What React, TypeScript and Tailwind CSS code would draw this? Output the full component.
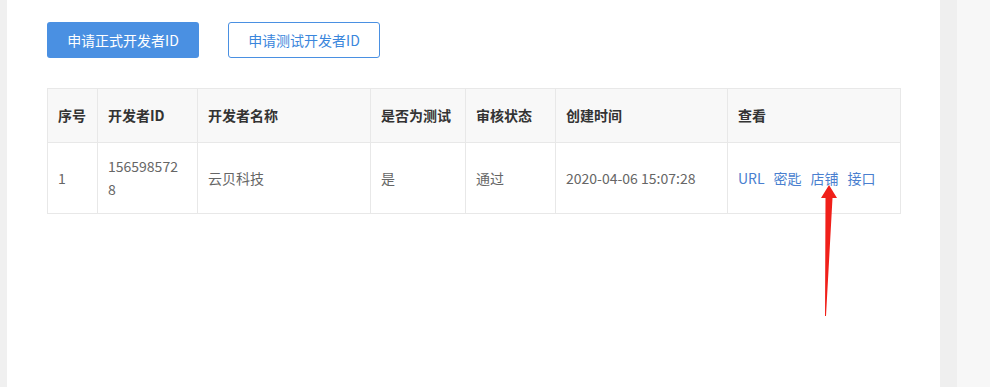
import React from "react"

const font = { fontFamily: '"Noto Sans CJK SC", "Microsoft YaHei", sans-serif' }

const rows = [
  {
    no: "1",
    id: "1565985728",
    name: "云贝科技",
    test: "是",
    status: "通过",
    created: "2020-04-06 15:07:28",
  },
]

const cols = [
  { title: "序号", w: "w-[50px]" },
  { title: "开发者ID", w: "w-[100px]" },
  { title: "开发者名称", w: "w-[173px]" },
  { title: "是否为测试", w: "w-[95px]" },
  { title: "审核状态", w: "w-[90px]" },
  { title: "创建时间", w: "w-[172px]" },
  { title: "查看", w: "w-[173px]" },
]

function Arrow() {
  return (
    <svg className="absolute left-[808px] top-[183px] pointer-events-none" width="26" height="136" viewBox="0 0 26 136">
      <polygon points="14,2 22,15 17.5,15 11,133 10,133 10.5,15 6,15" fill="#f0201a" />
    </svg>
  )
}

export default function App() {
  return (
    <div className="flex w-[990px] h-[387px] bg-white text-[14px]" style={font}>
      <div className="w-[7px] shrink-0 bg-[#f0f0f0]" />
      <div className="relative flex-1 bg-white pl-[40px] pt-[22px]">
        <div className="flex gap-[29px]">
          <button className="w-[152px] h-[36px] rounded-[3px] bg-[#4a90e2] text-white text-[14px]">
            申请正式开发者ID
          </button>
          <button className="w-[152px] h-[36px] rounded-[3px] border border-[#4a90e2] bg-white text-[#3a86dc] text-[14px]">
            申请测试开发者ID
          </button>
        </div>

        <table className="mt-[30px] w-[853px] border-collapse border border-[#e8e8e8] table-fixed">
          <thead>
            <tr className="bg-[#f8f8f8] h-[54px]">
              {cols.map((c) => (
                <th
                  key={c.title}
                  className={`${c.w} border border-[#e8e8e8] px-[10px] text-left font-bold text-[#333] text-[14px]`}
                >
                  {c.title}
                </th>
              ))}
            </tr>
          </thead>
          <tbody>
            {rows.map((r) => (
              <tr key={r.no} className="h-[71px] text-[#666]">
                <td className="border border-[#e8e8e8] px-[10px]">{r.no}</td>
                <td className="border border-[#e8e8e8] px-[10px] leading-[23px] break-all">
                  <div className="w-[76px]">{r.id}</div>
                </td>
                <td className="border border-[#e8e8e8] px-[10px]">{r.name}</td>
                <td className="border border-[#e8e8e8] px-[10px]">{r.test}</td>
                <td className="border border-[#e8e8e8] px-[10px]">{r.status}</td>
                <td className="border border-[#e8e8e8] px-[10px]">{r.created}</td>
                <td className="border border-[#e8e8e8] px-[10px]">
                  <div className="flex gap-[9px] text-[#4a7fcf]">
                    <a>URL</a>
                    <a>密匙</a>
                    <a>店铺</a>
                    <a>接口</a>
                  </div>
                </td>
              </tr>
            ))}
          </tbody>
        </table>
        <Arrow />
      </div>
      <div className="w-[17px] shrink-0 bg-[#efefef]" />
      <div className="w-[33px] shrink-0 bg-[#f7f7f7]" />
    </div>
  )
}
